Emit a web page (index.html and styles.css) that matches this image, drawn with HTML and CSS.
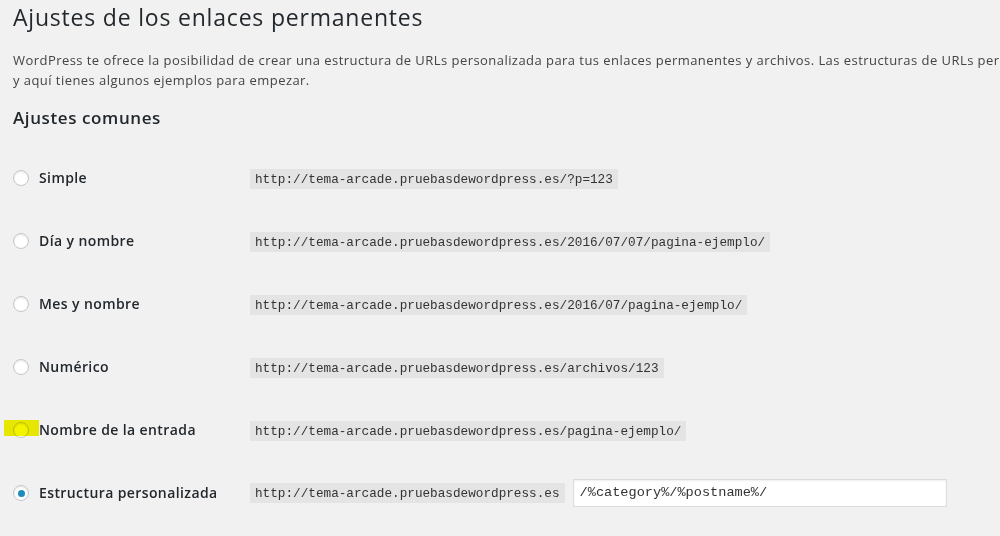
FILE: index.html
```html
<!DOCTYPE html>
<html lang="es">
<head>
<meta charset="utf-8">
<title>Ajustes de los enlaces permanentes</title>
<link rel="stylesheet" href="styles.css">
</head>
<body>
<div class="wrap">
  <h1 class="page-title">Ajustes de los enlaces permanentes</h1>
  <p class="intro">
    <span class="line">WordPress te ofrece la posibilidad de crear una estructura de URLs personalizada para tus enlaces permanentes y archivos. Las estructuras de URLs personalizadas pueden mejorar la estética, usabilidad y compatibilidad futura de tus enlaces. Hay disponibles varias etiquetas,</span>
    <span class="line">y aquí tienes algunos ejemplos para empezar.</span>
  </p>
  <h2 class="section-title">Ajustes comunes</h2>

  <div class="options">
    <label class="opt-label"><span class="radio"></span>Simple</label>
    <div class="opt-value"><code class="url">http://tema-arcade.pruebasdewordpress.es/?p=123</code></div>

    <label class="opt-label"><span class="radio"></span>Día y nombre</label>
    <div class="opt-value"><code class="url">http://tema-arcade.pruebasdewordpress.es/2016/07/07/pagina-ejemplo/</code></div>

    <label class="opt-label"><span class="radio"></span>Mes y nombre</label>
    <div class="opt-value"><code class="url">http://tema-arcade.pruebasdewordpress.es/2016/07/pagina-ejemplo/</code></div>

    <label class="opt-label"><span class="radio"></span>Numérico</label>
    <div class="opt-value"><code class="url">http://tema-arcade.pruebasdewordpress.es/archivos/123</code></div>

    <label class="opt-label"><span class="radio-holder"><span class="marker"></span><span class="radio"></span></span>Nombre de la entrada</label>
    <div class="opt-value"><code class="url">http://tema-arcade.pruebasdewordpress.es/pagina-ejemplo/</code></div>

    <label class="opt-label"><span class="radio checked"></span>Estructura personalizada</label>
    <div class="opt-value custom">
      <code class="url">http://tema-arcade.pruebasdewordpress.es</code>
      <input class="structure" type="text" value="/%category%/%postname%/">
    </div>
  </div>
</div>
</body>
</html>
```

FILE: styles.css
```css
html, body {
  margin: 0;
  padding: 0;
  background: #f1f1f1;
  overflow: hidden;
}

body {
  font-family: "Open Sans", "Noto Sans", sans-serif;
  color: #444;
  width: 1000px;
  height: 536px;
}

.wrap {
  padding: 3px 0 0 13px;
}

.page-title {
  margin: 0;
  font-size: 23px;
  line-height: 29px;
  font-weight: 400;
  letter-spacing: 0.8px;
  color: #23282d;
}

.intro {
  margin: 18px 0 0;
  font-size: 13px;
  line-height: 20px;
  letter-spacing: 0.45px;
  color: #444;
}

.intro .line {
  display: block;
  white-space: nowrap;
}

.section-title {
  margin: 16px 0 0;
  font-size: 17px;
  line-height: 24px;
  font-weight: 600;
  letter-spacing: 0.6px;
  color: #23282d;
}

.options {
  margin-top: 16px;
  display: grid;
  grid-template-columns: 237px auto;
  grid-auto-rows: 63px;
  align-items: center;
}

.opt-label {
  display: flex;
  align-items: center;
  gap: 10px;
  font-size: 14px;
  line-height: 20px;
  font-weight: 600;
  letter-spacing: 0.4px;
  color: #23282d;
  padding-top: 1px;
}

.radio {
  box-sizing: border-box;
  width: 16px;
  height: 16px;
  border: 1px solid #c4c7ca;
  border-radius: 50%;
  background: #fff;
  box-shadow: inset 0 1px 2px rgba(0, 0, 0, 0.1);
  display: flex;
  align-items: center;
  justify-content: center;
  flex: none;
}

.radio.checked::before {
  content: "";
  width: 7px;
  height: 7px;
  border-radius: 50%;
  background: #1e8cbe;
}

.radio-holder {
  position: relative;
  display: flex;
}

/* highlighter stroke laid over the radio */
.marker {
  position: absolute;
  left: -9px;
  top: -2px;
  width: 35px;
  height: 16px;
  background: #f4f400;
  mix-blend-mode: multiply;
  z-index: 1;
}

.opt-value {
  display: flex;
  align-items: center;
  padding-top: 2px;
}

.url {
  font-family: "Liberation Mono", "DejaVu Sans Mono", monospace;
  font-size: 12.7px;
  line-height: 15px;
  color: #333;
  background: #e4e4e4;
  padding: 3px 5px 2px;
}

.custom {
  gap: 8px;
  padding-top: 0;
}

.structure {
  box-sizing: border-box;
  width: 374px;
  height: 28px;
  margin: 0;
  padding: 0 6px;
  border: 1px solid #dcdcdc;
  background: #fff;
  box-shadow: inset 0 1px 2px rgba(0, 0, 0, 0.07);
  font-family: "Liberation Mono", "DejaVu Sans Mono", monospace;
  font-size: 13.6px;
  color: #333;
  outline: none;
}
```
